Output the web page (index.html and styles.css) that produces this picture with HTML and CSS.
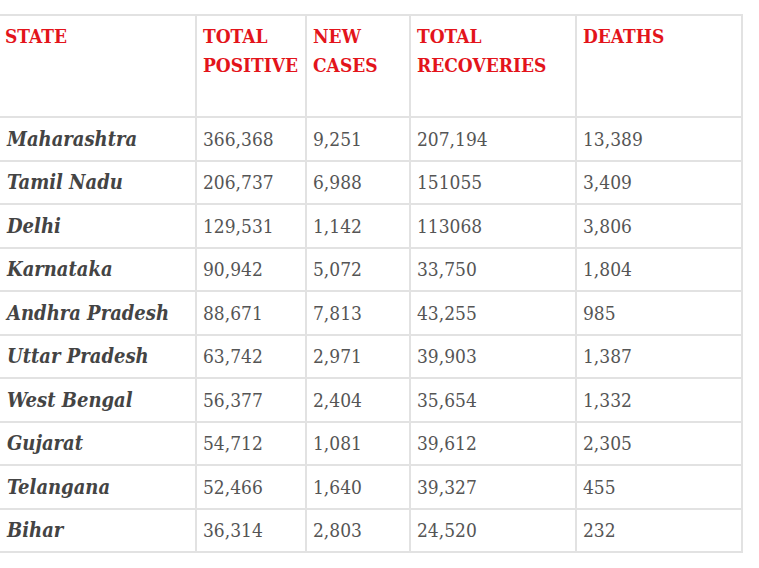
FILE: index.html
```html
<!DOCTYPE html>
<html>
<head>
<meta charset="utf-8">
<link rel="stylesheet" href="styles.css">
</head>
<body>
<table class="cases">
  <thead>
    <tr>
      <th class="c-state">STATE</th>
      <th class="c-pos">TOTAL POSITIVE</th>
      <th class="c-new">NEW CASES</th>
      <th class="c-rec">TOTAL RECOVERIES</th>
      <th class="c-death">DEATHS</th>
    </tr>
  </thead>
  <tbody>
    <tr><td class="state">Maharashtra</td><td>366,368</td><td>9,251</td><td>207,194</td><td>13,389</td></tr>
    <tr><td class="state">Tamil Nadu</td><td>206,737</td><td>6,988</td><td>151055</td><td>3,409</td></tr>
    <tr><td class="state">Delhi</td><td>129,531</td><td>1,142</td><td>113068</td><td>3,806</td></tr>
    <tr><td class="state">Karnataka</td><td>90,942</td><td>5,072</td><td>33,750</td><td>1,804</td></tr>
    <tr><td class="state">Andhra Pradesh</td><td>88,671</td><td>7,813</td><td>43,255</td><td>985</td></tr>
    <tr><td class="state">Uttar Pradesh</td><td>63,742</td><td>2,971</td><td>39,903</td><td>1,387</td></tr>
    <tr><td class="state">West Bengal</td><td>56,377</td><td>2,404</td><td>35,654</td><td>1,332</td></tr>
    <tr><td class="state">Gujarat</td><td>54,712</td><td>1,081</td><td>39,612</td><td>2,305</td></tr>
    <tr><td class="state">Telangana</td><td>52,466</td><td>1,640</td><td>39,327</td><td>455</td></tr>
    <tr><td class="state">Bihar</td><td>36,314</td><td>2,803</td><td>24,520</td><td>232</td></tr>
  </tbody>
</table>
</body>
</html>
```

FILE: styles.css
```css
html, body {
  margin: 0;
  padding: 0;
  background: #ffffff;
}
body {
  padding-top: 14px;
  font-family: "DejaVu Serif Condensed", "DejaVu Serif", serif;
}
.cases {
  border-collapse: collapse;
  margin-left: -3px;
  table-layout: fixed;
  width: 746px;
}
.cases th, .cases td {
  border: 2px solid #e2e2e2;
  text-align: left;
  padding: 0 6px;
}
.cases th {
  color: #e3141b;
  font-weight: bold;
  font-size: 19px;
  line-height: 29px;
  vertical-align: top;
  height: 102px;
  padding-top: 6px;
  box-sizing: border-box;
}
.c-state { width: 198px; }
.c-pos { width: 110px; }
.c-new { width: 104px; }
.c-rec { width: 166px; }
.c-death { width: 166px; }
.cases td {
  color: #555555;
  font-size: 19px;
  height: 43.5px;
  box-sizing: border-box;
  vertical-align: middle;
}
.cases td.state {
  font-weight: bold;
  font-style: italic;
  font-size: 20px;
  color: #444444;
  padding-left: 8px;
}
```
